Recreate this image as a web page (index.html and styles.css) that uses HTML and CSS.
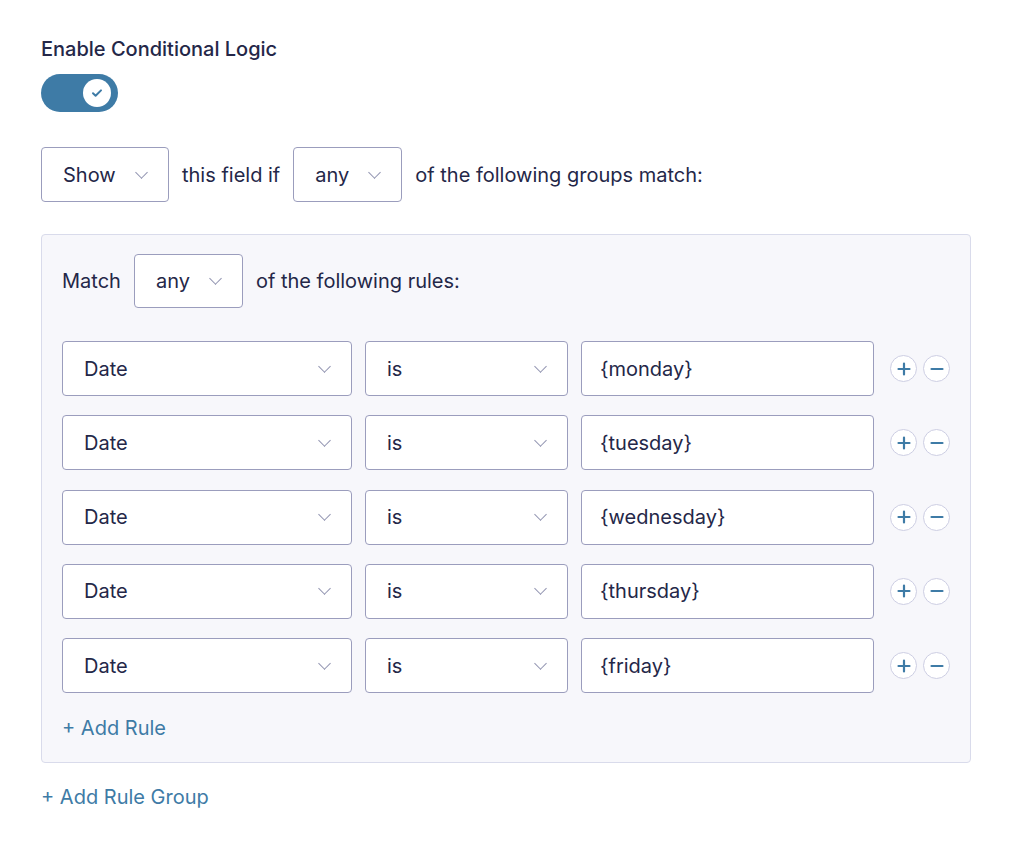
FILE: index.html
```html
<!DOCTYPE html>
<html lang="en">
<head>
    <meta charset="UTF-8">
    <title>Conditional Logic</title>
    <link rel="stylesheet" href="styles.css">
</head>
<body>
    <div class="settings">
        <h3 class="setting-title">Enable Conditional Logic</h3>
        <div class="toggle">
            <span class="toggle-knob">
                <svg width="14" height="14" viewBox="0 0 14 14"><path d="M3 7.3l2.6 2.5L11 4.4" fill="none" stroke="#3e7ba6" stroke-width="2" stroke-linecap="round" stroke-linejoin="round"/></svg>
            </span>
        </div>

        <div class="logic-line">
            <div class="select sel-show">Show <span class="chev"></span></div>
            <span>this field if</span>
            <div class="select sel-any">any <span class="chev"></span></div>
            <span>of the following groups match:</span>
        </div>

        <div class="rule-group">
            <div class="logic-line match-line">
                <span>Match</span>
                <div class="select sel-any">any <span class="chev"></span></div>
                <span>of the following rules:</span>
            </div>
            <div class="rules" id="rules"></div>
            <a class="add-link add-rule" href="#">+ Add Rule</a>
        </div>

        <a class="add-link" href="#">+ Add Rule Group</a>
    </div>

    <script>
        const days = ['monday', 'tuesday', 'wednesday', 'thursday', 'friday'];
        const rules = document.getElementById('rules');
        days.forEach(day => {
            const row = document.createElement('div');
            row.className = 'rule-row';
            row.innerHTML = `
                <div class="select sel-field">Date <span class="chev"></span></div>
                <div class="select sel-op">is <span class="chev"></span></div>
                <div class="text-input">{${day}}</div>
                <div class="rule-buttons">
                    <button class="circle-btn" aria-label="add">
                        <svg width="14" height="14" viewBox="0 0 14 14"><path d="M7 1.5v11M1.5 7h11" stroke="#3e7ba6" stroke-width="2.2" stroke-linecap="round"/></svg>
                    </button>
                    <button class="circle-btn" aria-label="remove">
                        <svg width="14" height="14" viewBox="0 0 14 14"><path d="M1.5 7h11" stroke="#3e7ba6" stroke-width="2.2" stroke-linecap="round"/></svg>
                    </button>
                </div>
            `;
            rules.appendChild(row);
        });
    </script>
</body>
</html>
```

FILE: styles.css
```css
* { margin: 0; padding: 0; box-sizing: border-box; }
body {
    font-family: 'Inter', 'Liberation Sans', sans-serif;
    background: #fff;
    color: #242748;
    font-size: 20px;
}
.settings {
    padding: 37px 41px;
    width: 1012px;
}
.setting-title {
    font-size: 20px;
    font-weight: 500;
    line-height: 24px;
    margin-bottom: 13px;
}
.toggle {
    width: 77px;
    height: 38px;
    border-radius: 19px;
    background-color: #3e7ba6;
    display: flex;
    align-items: center;
    justify-content: flex-end;
    padding-right: 7px;
    margin-bottom: 35px;
}
.toggle-knob {
    width: 28px;
    height: 28px;
    border-radius: 50%;
    background: #fff;
    display: flex;
    align-items: center;
    justify-content: center;
}
.logic-line {
    display: flex;
    align-items: center;
    gap: 13px;
}
.logic-line span { line-height: 24px; white-space: nowrap; }
.select {
    flex-shrink: 0;
    height: 55px;
    border: 1px solid #9b9dbd;
    border-radius: 4px;
    background: #fff;
    display: flex;
    align-items: center;
    justify-content: space-between;
    padding: 0 22px 0 21px;
}
.chev {
    width: 9px;
    height: 9px;
    border-right: 1.8px solid #9093b0;
    border-bottom: 1.8px solid #9093b0;
    transform: rotate(45deg);
    margin-top: -5px;
}
.sel-show { width: 128px; }
.sel-any { width: 109px; }
.rule-group {
    margin-top: 32px;
    width: 930px;
    background-color: #f7f7fb;
    border: 1px solid #d9dbeb;
    border-radius: 4px;
    padding: 19px 20px 22px;
    margin-bottom: 22px;
}
.match-line .sel-any { height: 54px; }
.rules {
    margin-top: 33px;
    display: flex;
    flex-direction: column;
    gap: 19.25px;
}
.rule-row {
    display: flex;
    align-items: center;
    gap: 13px;
    height: 55px;
}
.rule-row .select { height: 55px; }
.sel-field { width: 290px; }
.sel-op { width: 203px; }
.text-input {
    flex-shrink: 0;
    width: 293px;
    height: 55px;
    border: 1px solid #9b9dbd;
    border-radius: 4px;
    background: #fff;
    display: flex;
    align-items: center;
    padding: 0 18px;
}
.rule-buttons {
    display: flex;
    gap: 6px;
    margin-left: 3px;
}
.circle-btn {
    width: 27px;
    height: 27px;
    border-radius: 50%;
    border: 1.5px solid #cdcee3;
    background: #fff;
    display: flex;
    align-items: center;
    justify-content: center;
    cursor: pointer;
}
.add-link {
    display: inline-block;
    text-decoration: none;
    color: #3e7ba6;
    line-height: 24px;
}
.add-rule { margin-top: 23px; }
```
